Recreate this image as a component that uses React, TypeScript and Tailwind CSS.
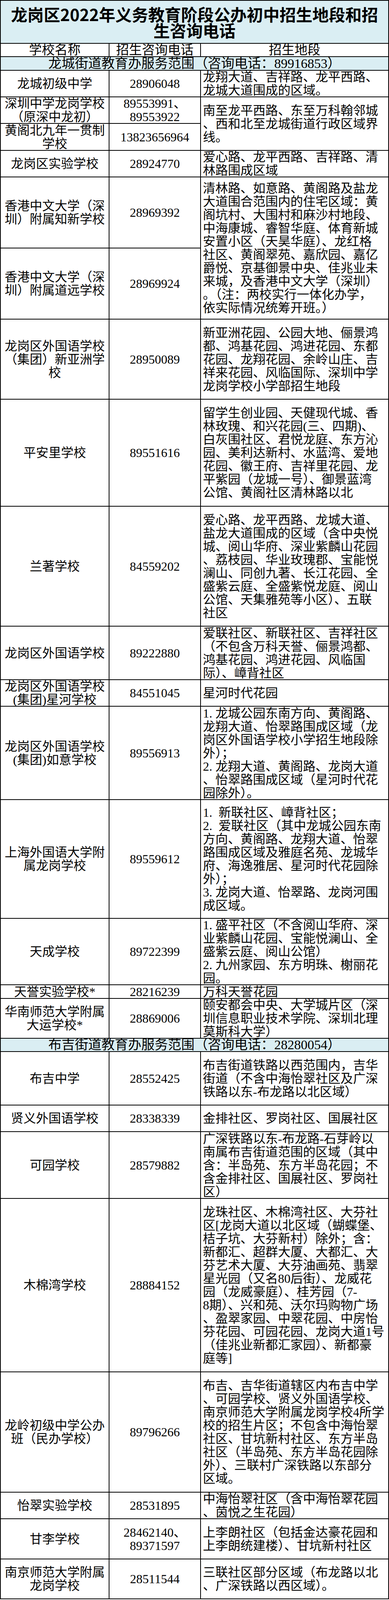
const S = 4094 / 5033;
const sy = (y: number) => Math.round(y * S);

type School = { name: string[]; phone: string[]; area: string[]; h: number };
type Pair = { top: Omit<School, 'area'>; bottom: Omit<School, 'area'>; area: string[] };
type Row =
  | { kind: 'section'; text: string }
  | ({ kind: 'school' } & School)
  | ({ kind: 'pair' } & Pair);

const rows: Row[] = [
  { kind: 'section', text: '龙城街道教育办服务范围（咨询电话：89916853）' },
  {
    kind: 'school',
    name: ['龙城初级中学'],
    phone: ['28906048'],
    area: ['龙翔大道、吉祥路、龙平西路、', '龙城大道围成的区域。'],
    h: 84,
  },
  {
    kind: 'pair',
    top: { name: ['深圳中学龙岗学校', '（原深中龙初）'], phone: ['89553991、', '89553922'], h: 84 },
    bottom: { name: ['黄阁北九年一贯制', '学校'], phone: ['13823656964'], h: 84 },
    area: ['南至龙平西路、东至万科翰邻城', '、西和北至龙城街道行政区域界', '线。'],
  },
  {
    kind: 'school',
    name: ['龙岗区实验学校'],
    phone: ['28924770'],
    area: ['爱心路、龙平西路、吉祥路、清', '林路围成区域'],
    h: 84,
  },
  {
    kind: 'pair',
    top: { name: ['香港中文大学（深', '圳）附属知新学校'], phone: ['28969392'], h: 224 },
    bottom: { name: ['香港中文大学（深', '圳）附属道远学校'], phone: ['28969924'], h: 224 },
    area: [
      '清林路、如意路、黄阁路及盐龙',
      '大道围合范围内的住宅区域：黄',
      '阁坑村、大围村和麻沙村地段、',
      '中海康城、睿智华庭、体育新城',
      '安置小区（天昊华庭）、龙红格',
      '社区、黄阁翠苑、嘉欣园、嘉亿',
      '爵悦、京基御景中央、佳兆业未',
      '来城，及香港中文大学（深圳）',
      '。（注：两校实行一体化办学，',
      '依实际情况统筹开班。）',
    ],
  },
  {
    kind: 'school',
    name: ['龙岗区外国语学校', '（集团）新亚洲学', '校'],
    phone: ['28950089'],
    area: [
      '新亚洲花园、公园大地、俪景鸿',
      '都、鸿基花园、鸿进花园、东都',
      '花园、龙翔花园、余岭山庄、吉',
      '祥来花园、风临国际、深圳中学',
      '龙岗学校小学部招生地段',
    ],
    h: 252,
  },
  {
    kind: 'school',
    name: ['平安里学校'],
    phone: ['89551616'],
    area: [
      '留学生创业园、天健现代城、香',
      '林玫瑰、和兴花园(三、四期)、',
      '白灰围社区、君悦龙庭、东方沁',
      '园、美利达新村、水蓝湾、爱地',
      '花园、徽王府、吉祥里花园、龙',
      '平紫园（龙城一号）、御景蓝湾',
      '公馆、黄阁社区清林路以北',
    ],
    h: 336,
  },
  {
    kind: 'school',
    name: ['兰著学校'],
    phone: ['84559202'],
    area: [
      '爱心路、龙平西路、龙城大道、',
      '盐龙大道围成的区域（含中央悦',
      '城、阅山华府、深业紫麟山花园',
      '、荔枝园、华业玫瑰郡、宝能悦',
      '澜山、同创九著、长江花园、全',
      '盛紫云庭、全盛紫悦龙庭、阅山',
      '公馆、天集雅苑等小区）、五联',
      '社区',
    ],
    h: 378,
  },
  {
    kind: 'school',
    name: ['龙岗区外国语学校'],
    phone: ['89222880'],
    area: [
      '爱联社区、新联社区、吉祥社区',
      '（不包含万科天誉、俪景鸿都、',
      '鸿基花园、鸿进花园、风临国',
      '际）、嶂背社区',
    ],
    h: 168,
  },
  {
    kind: 'school',
    name: ['龙岗区外国语学校', '(集团)星河学校'],
    phone: ['84551045'],
    area: ['星河时代花园'],
    h: 84,
  },
  {
    kind: 'school',
    name: ['龙岗区外国语学校', '(集团)如意学校'],
    phone: ['89556913'],
    area: [
      '1. 龙城公园东南方向、黄阁路、',
      '龙翔大道、怡翠路围成区域（龙',
      '岗区外国语学校小学招生地段除',
      '外）；',
      '2. 龙翔大道、黄阁路、龙岗大道',
      '、怡翠路围成区域（星河时代花',
      '园除外）。',
    ],
    h: 294,
  },
  {
    kind: 'school',
    name: ['上海外国语大学附', '属龙岗学校'],
    phone: ['89559612'],
    area: [
      '1.  新联社区、嶂背社区；',
      '2.  爱联社区（其中龙城公园东南',
      '方向、黄阁路、龙翔大道、怡翠',
      '路围成区域及雅庭名苑、龙城华',
      '府、海逸雅居、星河时代花园除',
      '外）；',
      '3. 龙岗大道、怡翠路、龙岗河围',
      '成区域。',
    ],
    h: 373,
  },
  {
    kind: 'school',
    name: ['天成学校'],
    phone: ['89722399'],
    area: [
      '1. 盛平社区（不含阅山华府、深',
      '业紫麟山花园、宝能悦澜山、全',
      '盛紫云庭、阅山公馆）',
      '2. 九州家园、东方明珠、榭丽花',
      '园。',
    ],
    h: 210,
  },
  { kind: 'school', name: ['天誉实验学校*'], phone: ['28216239'], area: ['万科天誉花园'], h: 42 },
  {
    kind: 'school',
    name: ['华南师范大学附属', '大运学校*'],
    phone: ['28869006'],
    area: ['颐安都会中央、大学城片区（深', '圳信息职业技术学院、深圳北理', '莫斯科大学）'],
    h: 126,
  },
  { kind: 'section', text: '布吉街道教育办服务范围（咨询电话：28280054）' },
  {
    kind: 'school',
    name: ['布吉中学'],
    phone: ['28552425'],
    area: ['布吉街道铁路以西范围内，吉华', '街道（不含中海怡翠社区及广深', '铁路以东-布龙路以北区域）'],
    h: 168,
  },
  {
    kind: 'school',
    name: ['贤义外国语学校'],
    phone: ['28338339'],
    area: ['金排社区、罗岗社区、国展社区'],
    h: 84,
  },
  {
    kind: 'school',
    name: ['可园学校'],
    phone: ['28579882'],
    area: [
      '广深铁路以东-布龙路-石芽岭以',
      '南属布吉街道范围的区域（其中',
      '含：半岛苑、东方半岛花园；不',
      '含金排社区、国展社区、罗岗社',
      '区）',
    ],
    h: 210,
  },
  {
    kind: 'school',
    name: ['木棉湾学校'],
    phone: ['28884152'],
    area: [
      '龙珠社区、木棉湾社区、大芬社',
      '区[龙岗大道以北区域（蝴蝶堡、',
      '桔子坑、大芬新村）除外；含：',
      '新都汇、超群大厦、大都汇、大',
      '芬艺术大厦、大芬油画苑、翡翠',
      '星光园（又名80后街）、龙威花',
      '园（龙威豪庭）、桂芳园（7-',
      '8期）、兴和苑、沃尔玛购物广场',
      '、盈翠家园、中翠花园、中房怡',
      '芬花园、可园花园、龙岗大道1号',
      '（佳兆业新都汇家园）、新都豪',
      '庭等]',
    ],
    h: 546,
  },
  {
    kind: 'school',
    name: ['龙岭初级中学公办', '班（民办学校）'],
    phone: ['89796266'],
    area: [
      '布吉、吉华街道辖区内布吉中学',
      '、可园学校、贤义外国语学校、',
      '南京师范大学附属龙岗学校4所学',
      '校的招生片区；不包含中海怡翠',
      '社区、甘坑新村社区、东方半岛',
      '社区（半岛苑、东方半岛花园除',
      '外）、三联村广深铁路以东部分',
      '区域。',
    ],
    h: 378,
  },
  {
    kind: 'school',
    name: ['怡翠实验学校'],
    phone: ['28531895'],
    area: ['中海怡翠社区（含中海怡翠花园', '、茵悦之生花园）'],
    h: 84,
  },
  {
    kind: 'school',
    name: ['甘李学校'],
    phone: ['28462140、', '89371597'],
    area: ['上李朗社区（包括金达豪花园和', '上李朗统建楼）、甘坑新村社区'],
    h: 126,
  },
  {
    kind: 'school',
    name: ['南京师范大学附属', '龙岗学校'],
    phone: ['28511544'],
    area: ['三联社区部分区域（布龙路以北', '、广深铁路以西区域）。'],
    h: 126,
  },
];

function Lines({ lines }: { lines: string[] }) {
  return (
    <>
      {lines.map((l, i) => (
        <div key={i} className="whitespace-pre">
          {l}
        </div>
      ))}
    </>
  );
}

function NamePhone({ name, phone }: { name: string[]; phone: string[] }) {
  return (
    <>
      <div className="flex w-[278px] shrink-0 flex-col items-center justify-center border-r-2 border-black text-center">
        <Lines lines={name} />
      </div>
      <div className="flex w-[232px] shrink-0 flex-col items-center justify-center text-center">
        <Lines lines={phone} />
      </div>
    </>
  );
}

function Area({ lines }: { lines: string[] }) {
  return (
    <div className="flex min-w-0 flex-1 flex-col justify-center pl-[5px]">
      <Lines lines={lines} />
    </div>
  );
}

export default function App() {
  // running top of the next row, in original (unscaled) pixels
  let y = 180;
  const next = (h: number) => {
    const out = sy(y + h) - sy(y);
    y += h;
    return out;
  };

  return (
    <div className="w-[995px] border-x-2 border-t-2 border-black bg-white font-['Liberation_Serif','Noto_Sans_CJK_SC',serif] text-[32px] leading-[34px] text-black">
      <div className="flex h-[110px] flex-col items-center justify-center border-b-2 border-black bg-[#daeef3] font-['Noto_Sans_CJK_SC',sans-serif] text-[42px] leading-[41px] font-bold">
        <div className="whitespace-nowrap">龙岗区2022年义务教育阶段公办初中招生地段和招</div>
        <div>生咨询电话</div>
      </div>
      <div className="flex h-[34px] border-b-2 border-black text-[33px] leading-[32px]">
        <div className="flex w-[278px] shrink-0 items-center justify-center border-r-2 border-black">学校名称</div>
        <div className="flex w-[234px] shrink-0 items-center justify-center border-r-2 border-black">招生咨询电话</div>
        <div className="flex flex-1 items-center justify-center">招生地段</div>
      </div>
      {rows.map((r, i) => {
        if (r.kind === 'section') {
          return (
            <div
              key={i}
              style={{ height: next(42) }}
              className="flex items-center justify-center border-b-2 border-black bg-[#daeef3] text-[34px] leading-[32px] whitespace-nowrap"
            >
              {r.text}
            </div>
          );
        }
        if (r.kind === 'pair') {
          const h1 = next(r.top.h);
          const h2 = next(r.bottom.h);
          return (
            <div key={i} className="flex border-b-2 border-black">
              <div className="flex w-[512px] shrink-0 flex-col border-r-2 border-black">
                <div className="flex border-b-2 border-black" style={{ height: h1 }}>
                  <NamePhone name={r.top.name} phone={r.top.phone} />
                </div>
                <div className="flex" style={{ height: h2 - 2 }}>
                  <NamePhone name={r.bottom.name} phone={r.bottom.phone} />
                </div>
              </div>
              <Area lines={r.area} />
            </div>
          );
        }
        return (
          <div key={i} className="flex border-b-2 border-black" style={{ height: next(r.h) }}>
            <div className="flex w-[512px] shrink-0 border-r-2 border-black">
              <NamePhone name={r.name} phone={r.phone} />
            </div>
            <Area lines={r.area} />
          </div>
        );
      })}
    </div>
  );
}
